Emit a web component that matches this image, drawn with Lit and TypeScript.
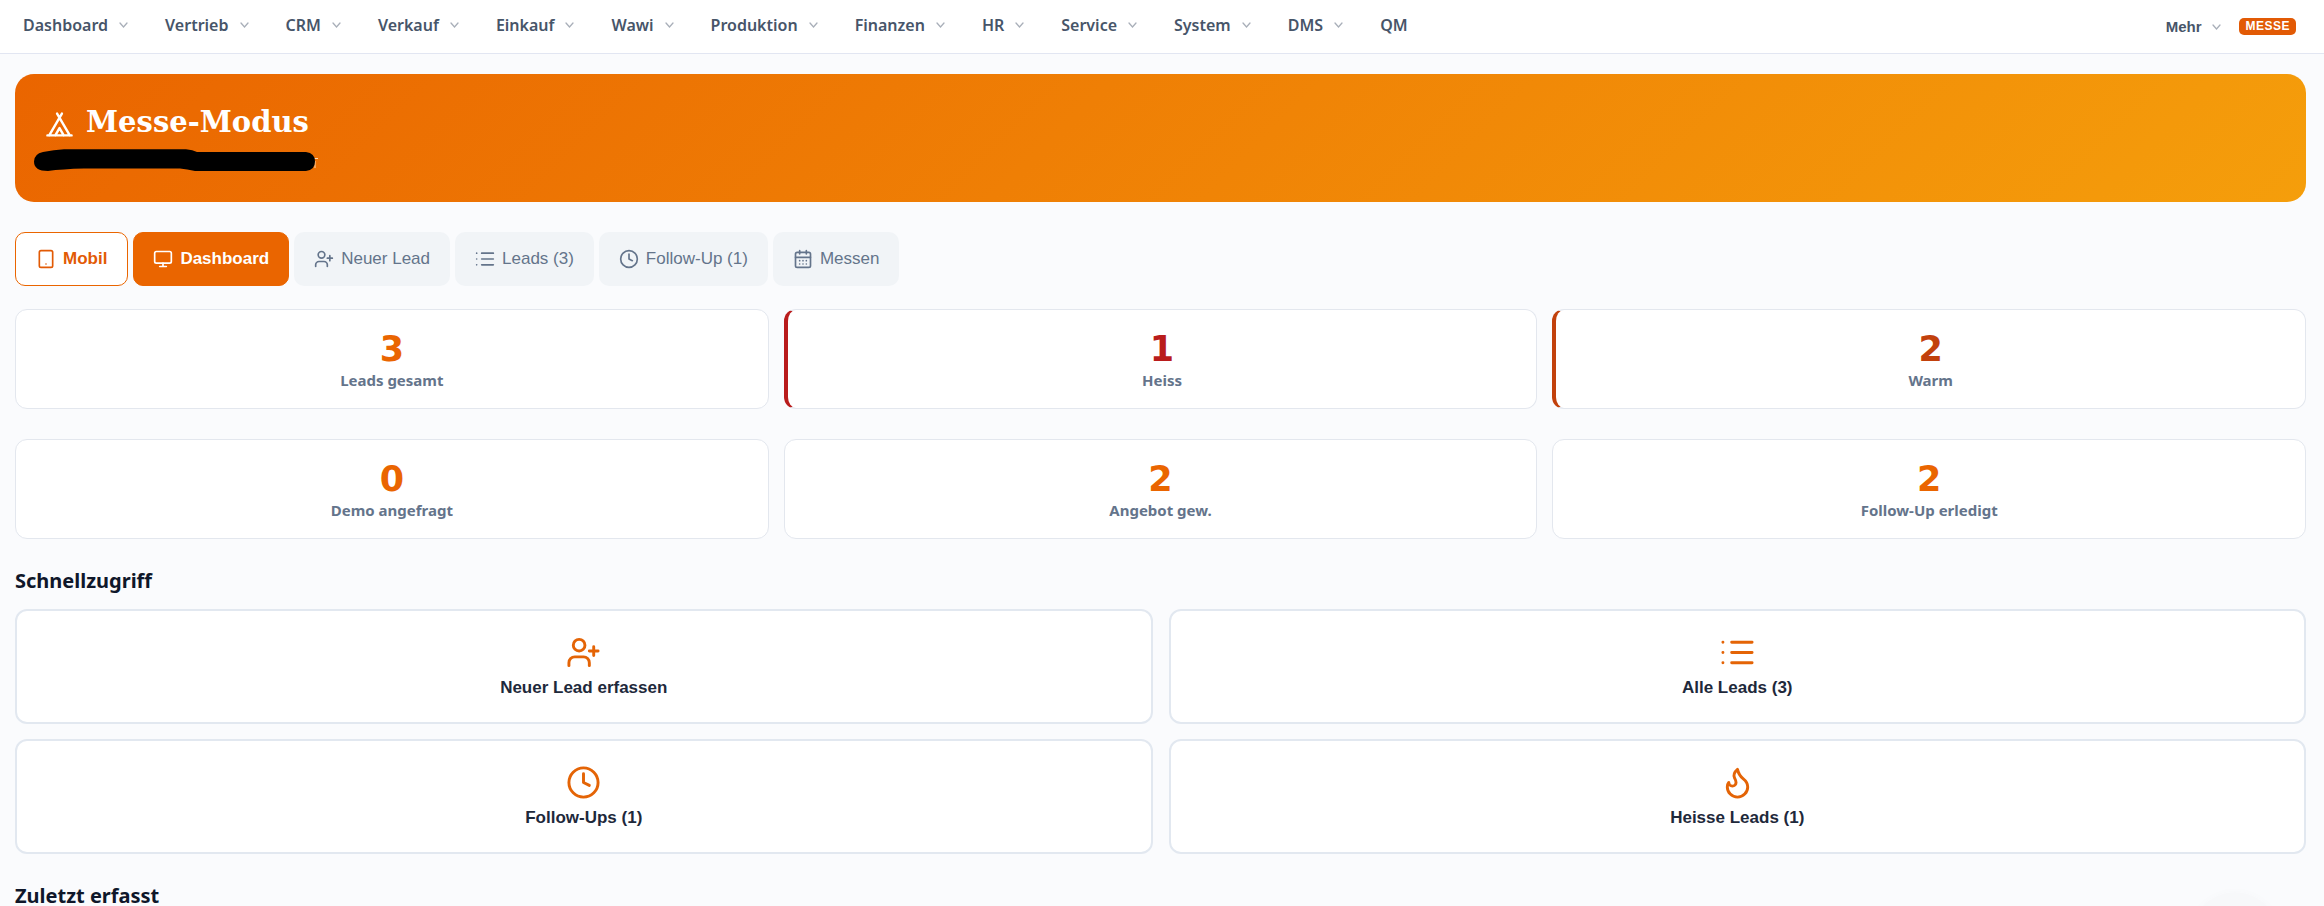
import { LitElement, html, css, svg } from "lit";
import { customElement, property } from "lit/decorators.js";
import { classMap } from "lit/directives/class-map.js";

const ICONS: Record<string, unknown> = {
  tent: svg`<path d="M3.5 21 14 3M20.5 21 10 3M15.5 21 12 15l-3.5 6M2 21h20"/>`,
  phone: svg`<rect x="4" y="2" width="16" height="20" rx="2"/><path d="M12 18h.01"/>`,
  monitor: svg`<rect x="2" y="3" width="20" height="14" rx="2"/><path d="M8 21h8M12 17v4"/>`,
  userPlus: svg`<path d="M16 21v-2a4 4 0 0 0-4-4H6a4 4 0 0 0-4 4v2"/><circle cx="9" cy="7" r="4"/><path d="M19 8v6M22 11h-6"/>`,
  list: svg`<path d="M8 5h14M8 12h14M8 19h14M2 5h.01M2 12h.01M2 19h.01"/>`,
  clock: svg`<circle cx="12" cy="12" r="10"/><path d="M12 6v6l4 2"/>`,
  calendar: svg`<rect x="3" y="4" width="18" height="18" rx="2"/><path d="M8 2v4M16 2v4M3 10h18M8 14h.01M12 14h.01M16 14h.01M8 18h.01M12 18h.01M16 18h.01"/>`,
  flame: svg`<path d="M8.5 14.5A2.5 2.5 0 0 0 11 12c0-1.38-.5-2-1-3-1.072-2.143-.224-4.054 2-6 .5 2.5 2 4.9 4 6.500 2 1.6 3 3.5 3 5.5a7 7 0 1 1-14 0c0-1.153.433-2.294 1-3a2.5 2.5 0 0 0 2.5 2.5z"/>`,
};

@customElement("line-icon")
class LineIcon extends LitElement {
  @property() name = "";
  static styles = css`
    :host { display: block; flex: none; width: 20px; height: 20px; }
    .glyph { display: block; width: 100%; height: 100%; fill: none; stroke: currentColor; stroke-width: 2; stroke-linecap: round; stroke-linejoin: round; }
  `;
  render() {
    return html`<svg class="glyph" viewBox="0 0 24 24" aria-hidden="true">${ICONS[this.name]}</svg>`;
  }
}

const MENU = ["Dashboard", "Vertrieb", "CRM", "Verkauf", "Einkauf", "Wawi", "Produktion", "Finanzen", "HR", "Service", "System", "DMS", "QM"];

const TABS = [
  { icon: "phone", label: "Mobil", kind: "outline" },
  { icon: "monitor", label: "Dashboard", kind: "active" },
  { icon: "userPlus", label: "Neuer Lead", kind: "" },
  { icon: "list", label: "Leads (3)", kind: "" },
  { icon: "clock", label: "Follow-Up (1)", kind: "" },
  { icon: "calendar", label: "Messen", kind: "" },
];

const STATS = [
  { value: 3, label: "Leads gesamt", tone: "" },
  { value: 1, label: "Heiss", tone: "hot" },
  { value: 2, label: "Warm", tone: "warm" },
  { value: 0, label: "Demo angefragt", tone: "" },
  { value: 2, label: "Angebot gew.", tone: "" },
  { value: 2, label: "Follow-Up erledigt", tone: "" },
];

const QUICK = [
  { icon: "userPlus", label: "Neuer Lead erfassen" },
  { icon: "list", label: "Alle Leads (3)" },
  { icon: "clock", label: "Follow-Ups (1)" },
  { icon: "flame", label: "Heisse Leads (1)" },
];

const chevron = html`<svg class="chevron" viewBox="0 0 9 6" aria-hidden="true"><path d="M1 1l3.5 4L8 1"/></svg>`;

@customElement("app-root")
class AppRoot extends LitElement {
  static styles = css`
    :host {
      display: block;
      height: 100vh;
      overflow: hidden;
      background: #fafbfd;
      color: #0f172a;
      font-family: "Noto Sans", sans-serif;
    }
    * { box-sizing: border-box; }
    button { margin: 0; border: 0; padding: 0; background: none; color: inherit; font: inherit; cursor: pointer; }
    .top { display: flex; align-items: center; justify-content: space-between; height: 54px; padding: 0 28px 3px 23px; background: #fff; border-bottom: 1px solid #e2e6f2; color: #475569; }
    .menu { display: flex; gap: 37px; }
    .menu-item { display: flex; align-items: center; gap: 11px; font-size: 16px; line-height: 24px; font-weight: 600; }
    .side { display: flex; align-items: center; gap: 18px; padding-top: 3px; font-family: "Liberation Sans", sans-serif; }
    .more { display: flex; align-items: center; gap: 11px; font-size: 15px; line-height: 20px; font-weight: 700; }
    .chevron { display: block; width: 9px; height: 6px; fill: none; stroke: #a9afb9; stroke-width: 1.3; stroke-linecap: round; }
    .badge { padding: 0 6px; border-radius: 5px; background: #e25a05; color: #fff; font-size: 12px; line-height: 17px; font-weight: 700; letter-spacing: 0.5px; }
    main { padding: 20px 18px 0 15px; }
    .banner { padding: 31px 19px 30px; border-radius: 19px; background: linear-gradient(135deg, #ea6500, #f59e0b); color: #fff; }
    .title { display: flex; align-items: flex-end; gap: 12px; margin: 0 0 10px; padding-left: 11px; font: 700 29px/34px "DejaVu Serif", serif; }
    .title line-icon { width: 29px; height: 29px; }
    .marker { display: block; width: 284px; height: 23px; }
    .tabs { display: flex; gap: 5px; margin: 30px 0 23px; }
    .tab { display: flex; align-items: center; gap: 7px; height: 54px; padding: 0 19px; border: 1px solid transparent; border-radius: 10px; background: #f1f4f7; color: #64748b; font: 17px/20px "Liberation Sans", sans-serif; }
    .tab.outline { padding: 0 20px; background: #fff; border-color: #ea6500; color: #e25a05; font-weight: 700; }
    .tab.active { border-color: #ea6500; background: #ea6500; color: #fff; font-weight: 700; }
    .stats { display: grid; grid-template-columns: repeat(3, 1fr); gap: 30px 15px; margin: 0; }
    .stat { display: flex; flex-direction: column-reverse; padding: 19px 16px 17px; border: 1px solid #e3e7ee; border-radius: 12px; background: #fff; text-align: center; }
    .value { margin: 0; color: #ea6500; font: 700 35px/40px "DejaVu Sans", sans-serif; }
    .label { color: #64748b; font-size: 15px; line-height: 22px; font-weight: 700; }
    .hot { border-left: 4px solid #b91c1c; }
    .hot .value { color: #b91c1c; }
    .warm { border-left: 4px solid #c2410c; }
    .warm .value { color: #c2410c; }
    .section { margin: 28px 0 14px; font-size: 20px; line-height: 28px; font-weight: 700; }
    .quick { display: grid; grid-template-columns: repeat(2, 1fr); gap: 15px 16px; }
    .action { display: flex; flex-direction: column; align-items: center; gap: 8px; padding: 24px 16px; border: 2px solid #e2e8f0; border-radius: 12px; background: #fff; color: #1e293b; font: 700 17px/20px "Liberation Sans", sans-serif; }
    .action line-icon { width: 35px; height: 35px; color: #e46406; }
    .float { position: fixed; right: 44px; bottom: -76px; width: 90px; height: 90px; border-radius: 50%; box-shadow: 0 0 8px rgba(15, 23, 42, 0.02); background: rgba(15, 23, 42, 0.01); }
  `;

  render() {
    return html`
      <header class="top">
        <nav class="menu">
          ${MENU.map((m) => html`<button class="menu-item">${m}${m === "QM" ? "" : chevron}</button>`)}
        </nav>
        <div class="side">
          <button class="more">Mehr${chevron}</button>
          <span class="badge">MESSE</span>
        </div>
      </header>
      <main>
        <section class="banner">
          <h1 class="title"><line-icon name="tent"></line-icon>Messe-Modus</h1>
          <svg class="marker" viewBox="0 0 284 23" aria-hidden="true">
            <path d="M280 9.500h4M281 12v7" stroke="#ffd9b0" fill="none"/>
            <path d="M9 3Q20 1 30 .3L152 .3Q159 1 163 3H272Q281 4 281 12.500Q281 21 272 22H161Q153 20 146 19.500H50Q28 20 14 22Q0 22 0 12.500Q0 5 9 3Z"/>
          </svg>
        </section>
        <div class="tabs">
          ${TABS.map((t) => html`
            <button class=${classMap({ tab: true, outline: t.kind === "outline", active: t.kind === "active" })}>
              <line-icon name=${t.icon}></line-icon>${t.label}
            </button>`)}
        </div>
        <dl class="stats">
          ${STATS.map((s) => html`
            <div class=${classMap({ stat: true, hot: s.tone === "hot", warm: s.tone === "warm" })}>
              <dt class="label">${s.label}</dt>
              <dd class="value">${s.value}</dd>
            </div>`)}
        </dl>
        <h2 class="section">Schnellzugriff</h2>
        <div class="quick">
          ${QUICK.map((q) => html`<button class="action"><line-icon name=${q.icon}></line-icon>${q.label}</button>`)}
        </div>
        <h2 class="section">Zuletzt erfasst</h2>
      </main>
      <div class="float"></div>
    `;
  }
}
